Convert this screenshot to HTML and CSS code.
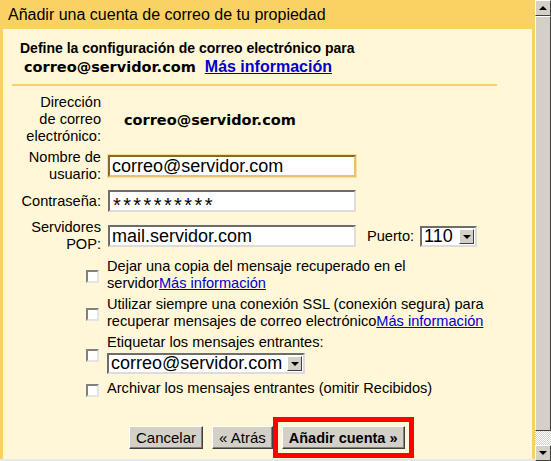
FILE: index.html
```html
<!DOCTYPE html>
<html lang="es">
<head>
    <meta charset="UTF-8">
    <title>Añadir una cuenta de correo</title>
    <link rel="stylesheet" href="styles.css">
</head>
<body>
    <div class="window">
        <div class="panel">
            <div class="title">Añadir una cuenta de correo de tu propiedad</div>
            <div class="content">
                <div class="intro">
                    <div class="intro-text">Define la configuración de correo electrónico para</div>
                    <div class="intro-row">
                        <span class="email">correo@servidor.com</span>
                        <a href="#" class="more bold">Más información</a>
                    </div>
                </div>
                <div class="rule"></div>

                <div class="form">
                    <div class="label">Dirección<br>de correo<br>electrónico:</div>
                    <div class="value"><span class="email">correo@servidor.com</span></div>

                    <div class="label">Nombre de<br>usuario:</div>
                    <div class="value"><input type="text" class="field focused" value="correo@servidor.com"></div>

                    <div class="label">Contraseña:</div>
                    <div class="value pass-row"><div class="field pass">**********</div></div>

                    <div class="label">Servidores<br>POP:</div>
                    <div class="value">
                        <input type="text" class="field" value="mail.servidor.com">
                        <span class="port-label">Puerto:</span>
                        <span class="select port"><span class="select-text">110</span><span class="drop"></span></span>
                    </div>
                </div>

                <div class="options">
                    <div class="option">
                        <span class="check"></span>
                        <div class="option-text">Dejar una copia del mensaje recuperado en el<br>servidor<a href="#" class="more">Más información</a></div>
                    </div>
                    <div class="option">
                        <span class="check"></span>
                        <div class="option-text">Utilizar siempre una conexión SSL (conexión segura) para<br>recuperar mensajes de correo electrónico<a href="#" class="more">Más información</a></div>
                    </div>
                    <div class="option tall">
                        <span class="check"></span>
                        <div class="option-text">
                            Etiquetar los mensajes entrantes:<br>
                            <span class="select label-select"><span class="select-text">correo@servidor.com</span><span class="drop"></span></span>
                        </div>
                    </div>
                    <div class="option">
                        <span class="check"></span>
                        <div class="option-text">Archivar los mensajes entrantes (omitir Recibidos)</div>
                    </div>
                </div>

                <div class="buttons">
                    <button class="btn">Cancelar</button>
                    <button class="btn">« Atrás</button>
                    <span class="highlight"><button class="btn bold">Añadir cuenta »</button></span>
                </div>
            </div>
        </div>
        <div class="scrollbar">
            <div class="sb-btn"><span class="arrow up"></span></div>
            <div class="sb-thumb"></div>
            <div class="sb-track"></div>
            <div class="sb-btn"><span class="arrow down"></span></div>
        </div>
    </div>
</body>
</html>
```

FILE: styles.css
```css
body {
    margin: 0;
    font-family: "Liberation Sans", Arial, sans-serif;
    font-size: 14.6px;
    color: #000;
    background: #e8e8e8;
    overflow: hidden;
}
.window {
    display: flex;
    height: 461px;
    width: 551px;
}
.panel {
    flex: 1;
    display: flex;
    flex-direction: column;
    background: #fad163;
    padding: 0 3px;
    margin-bottom: 2px;
}
.title {
    height: 29px;
    line-height: 30px;
    padding-left: 5px;
    font-size: 16px;
}
.content {
    flex: 1;
    background: #fff7d7;
}
.intro {
    padding: 10px 0 0 17px;
}
.intro-text {
    font-weight: bold;
    font-size: 14px;
    line-height: 18px;
}
.intro-row {
    display: flex;
    align-items: baseline;
    gap: 9px;
    padding-left: 4px;
    line-height: 19px;
}
.email {
    font-family: "DejaVu Sans", Verdana, sans-serif;
    font-weight: bold;
    font-size: 14.5px;
}
a.more {
    color: #0000cc;
    text-decoration: underline;
}
.bold {
    font-weight: bold;
}
.intro-row .more {
    font-size: 16px;
}
.rule {
    height: 2px;
    background: #fad163;
    margin: 7px 35px 0 9px;
}
.form {
    display: grid;
    grid-template-columns: 98px 1fr;
    column-gap: 7px;
    row-gap: 4px;
    align-items: center;
    margin-top: 8px;
}
.label {
    text-align: right;
    line-height: 17px;
}
.value {
    display: flex;
    align-items: center;
}
.pass-row {
    padding: 3px 0;
}
.form .value .email {
    padding-left: 16px;
}
.field {
    width: 240px;
    height: 18px;
    padding: 0 2px;
    margin: 0;
    font-family: "Liberation Sans", Arial, sans-serif;
    font-size: 18px;
    border: 2px solid;
    border-color: #6d6d6d #dcdcdc #dcdcdc #6d6d6d;
    background: #fff;
    color: #000;
}
.field.focused {
    border-color: #8a6a20 #e8c070 #e8c070 #8a6a20;
    box-shadow: 0 0 0 1px #f6dfa0;
}
.field.pass {
    font-size: 20px;
    height: 11px;
    line-height: 13px;
    padding-top: 7px;
    padding-left: 3px;
    letter-spacing: 2.4px;
    white-space: nowrap;
    width: 239px;
}
.port-label {
    margin-left: 11px;
    margin-right: 6px;
}
.select {
    display: inline-flex;
    align-items: center;
    height: 17px;
    background: #fff;
    border: 2px solid;
    border-color: #6d6d6d #dcdcdc #dcdcdc #6d6d6d;
    font-size: 18px;
}
.select-text {
    flex: 1;
    padding-left: 2px;
    line-height: 17px;
}
.drop {
    width: 15px;
    height: 15px;
    margin: 0 1px;
    background: #d4d0c8;
    border: 1px solid;
    border-color: #fff #404040 #404040 #fff;
    box-sizing: border-box;
    position: relative;
}
.drop::after {
    content: "";
    position: absolute;
    left: 3px;
    top: 5px;
    border-left: 4px solid transparent;
    border-right: 4px solid transparent;
    border-top: 4px solid #000;
}
.port {
    width: 53px;
}
.label-select {
    width: 194px;
    margin-top: 2px;
}
.options {
    margin: 5px 0 0 83px;
}
.option {
    display: flex;
    align-items: center;
    gap: 8px;
    margin-bottom: 4px;
}
.option.tall {
    margin-bottom: 6px;
}
.option-text {
    line-height: 17px;
    white-space: nowrap;
}
.check {
    width: 13px;
    height: 13px;
    box-sizing: border-box;
    flex: none;
    background: #fff;
    border: 2px solid;
    border-color: #808080 #e4e4e4 #e4e4e4 #808080;
    margin-top: 3px;
}
.buttons {
    display: flex;
    align-items: center;
    margin: 20px 0 0 126px;
}
.btn {
    height: 23px;
    padding: 0 6px;
    margin-right: 9px;
    font-family: "Liberation Sans", Arial, sans-serif;
    font-size: 15px;
    background: #d4d0c8;
    border: 1px solid;
    border-color: #fff #404040 #404040 #fff;
    box-shadow: inset -1px -1px 0 #808080;
    color: #000;
}
.highlight {
    margin-left: -9px;
    border: 5px solid #ff0000;
    padding: 4px;
    display: flex;
}
.highlight .btn {
    margin: 0;
    padding: 0 6px;
    font-size: 14.5px;
}
.scrollbar {
    width: 16px;
    display: flex;
    flex-direction: column;
    background: #d4d0c8;
}
.sb-btn {
    height: 16px;
    box-sizing: border-box;
    background: #d4d0c8;
    border: 1px solid;
    border-color: #fff #404040 #404040 #fff;
    display: flex;
    align-items: center;
    justify-content: center;
}
.sb-thumb {
    flex: 1;
    background: #d4d0c8;
    border: 1px solid;
    border-color: #fff #404040 #404040 #fff;
}
.sb-track {
    height: 14px;
    background: repeating-conic-gradient(#d4d0c8 0 25%, #ffffff 0 50%) 0 0 / 2px 2px;
}
.arrow {
    width: 0;
    height: 0;
    border-left: 4px solid transparent;
    border-right: 4px solid transparent;
}
.arrow.up {
    border-bottom: 4px solid #000;
}
.arrow.down {
    border-top: 4px solid #000;
}
```
